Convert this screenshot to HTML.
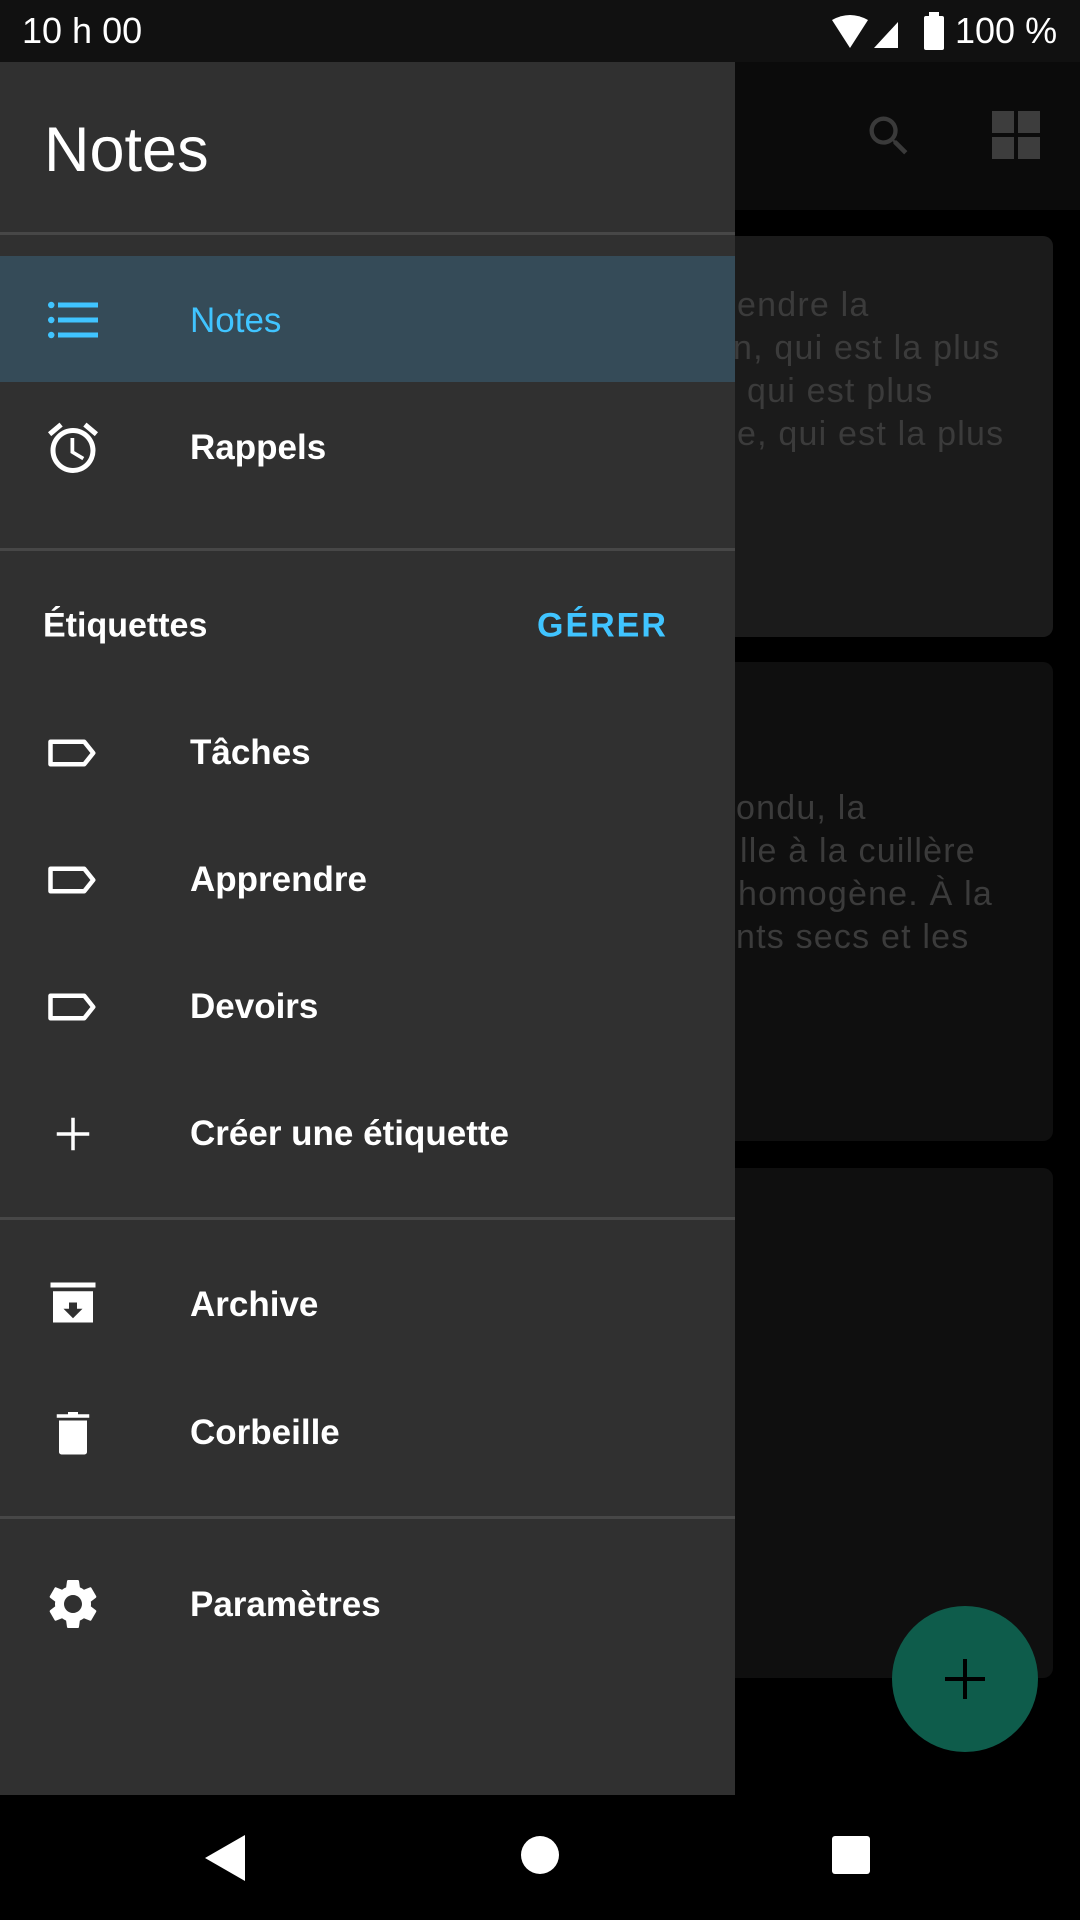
<!DOCTYPE html>
<html><head><meta charset="utf-8"><style>
*{margin:0;padding:0;box-sizing:border-box}
body{width:1080px;height:1920px;background:#000;position:relative;overflow:hidden;font-family:"Liberation Sans",Roboto,sans-serif}
.abs{position:absolute}
.status{left:0;top:0;width:1080px;height:62px;background:#111;color:#fff;font-size:36px}
.tb{left:735px;top:62px;width:345px;height:148px;background:#0b0b0b}
.card{border-radius:10px;left:700px;width:353px;overflow:hidden}
.ct{position:absolute;color:#3b3b3b;font-size:34px;white-space:nowrap;letter-spacing:1.2px}
.drawer{left:0;top:62px;width:735px;height:1733px;background:#303030}
.div{left:0;width:735px;height:3px;background:#474747}
.item{left:190px;color:#fff;font-size:35px;font-weight:bold;transform:translateY(-50%)}
.ic{left:43px;width:60px;height:60px;transform:translateY(-50%)}
.nav{left:0;top:1795px;width:1080px;height:125px;background:#000}
</style></head><body>
<div class="abs status">
<div class="abs" style="left:22px;top:10px">10 h 00</div>
<svg class="abs" style="left:830px;top:14px" width="70" height="36" viewBox="0 0 70 36"><path d="M2 6 Q20 -4 38 6 L20 34 Z" fill="#fff"/><path d="M44 34 L68 8 L68 34 Z" fill="#fff"/></svg>
<svg class="abs" style="left:922px;top:12px" width="24" height="38"><rect x="7" y="0" width="10" height="4" fill="#fff"/><rect x="2" y="4" width="20" height="34" rx="2" fill="#fff"/></svg>
<div class="abs" style="left:955px;top:10px">100 %</div>
</div>
<div class="abs tb">
<svg class="abs" style="left:128px;top:48px" width="52" height="52" viewBox="0 0 24 24"><path fill="#3a3a3a" d="M15.5 14h-.79l-.28-.27A6.471 6.471 0 0016 9.5 6.5 6.5 0 109.5 16c1.61 0 3.09-.59 4.23-1.57l.27.28v.79l5 4.99L20.49 19l-4.99-5zm-6 0C7.01 14 5 11.99 5 9.5S7.01 5 9.5 5 14 7.01 14 9.5 11.99 14 9.5 14z"/></svg>
<svg class="abs" style="left:257px;top:49px" width="48" height="48"><rect x="0" y="0" width="22" height="22" fill="#3d3d3d"/><rect x="26" y="0" width="22" height="22" fill="#3d3d3d"/><rect x="0" y="26" width="22" height="22" fill="#3d3d3d"/><rect x="26" y="26" width="22" height="22" fill="#3d3d3d"/></svg>
</div>
<div class="abs card" style="top:236px;height:401px;background:#1b1b1b">
<div class="ct" style="left:37px;top:50px">endre la</div>
<div class="ct" style="left:33px;top:93px">n, qui est la plus</div>
<div class="ct" style="left:47px;top:136px">qui est plus</div>
<div class="ct" style="left:37px;top:179px">e, qui est la plus</div>
</div>
<div class="abs card" style="top:662px;height:479px;background:#0f0f0f">
<div class="ct" style="left:36px;top:127px">ondu, la</div>
<div class="ct" style="left:40px;top:170px">lle à la cuillère</div>
<div class="ct" style="left:38px;top:213px">homogène. À la</div>
<div class="ct" style="left:36px;top:256px">nts secs et les</div>
</div>
<div class="abs card" style="top:1168px;height:510px;background:#0f0f0f"></div>
<div class="abs" style="left:892px;top:1606px;width:146px;height:146px;border-radius:50%;background:#0e5c4b"></div>
<svg class="abs" style="left:945px;top:1659px" width="40" height="40"><rect x="18" y="0" width="4" height="40" fill="#000"/><rect x="0" y="18" width="40" height="4" fill="#000"/></svg>

<div class="abs drawer"></div>
<div class="abs" style="left:44px;top:150px;transform:translateY(-50%);color:#fff;font-size:63px">Notes</div>
<div class="abs div" style="top:232px"></div>
<div class="abs" style="left:0;top:256px;width:735px;height:126px;background:#354b58"></div>
<svg class="abs ic" style="top:320px" viewBox="0 0 24 24"><g fill="#40c4ff"><circle cx="3.3" cy="6" r="1.3"/><circle cx="3.3" cy="12" r="1.3"/><circle cx="3.3" cy="18" r="1.3"/><rect x="6" y="5" width="16" height="2"/><rect x="6" y="11" width="16" height="2"/><rect x="6" y="17" width="16" height="2"/></g></svg>
<div class="abs item" style="top:321px;color:#40c4ff;font-weight:normal">Notes</div>
<svg class="abs ic" style="top:448px" viewBox="0 0 24 24"><path fill="#fff" d="M22 5.72l-4.6-3.86-1.29 1.53 4.6 3.86L22 5.72zM7.88 3.39L6.6 1.86 2 5.71l1.29 1.53 4.59-3.85zM12.5 8H11v6l4.75 2.85.75-1.23-4-2.37V8zM12 4c-4.97 0-9 4.030-9 9s4.02 9 9 9a9 9 0 000-18zm0 16c-3.87 0-7-3.13-7-7s3.13-7 7-7 7 3.13 7 7-3.13 7-7 7z"/></svg>
<div class="abs item" style="top:448px">Rappels</div>
<div class="abs div" style="top:548px"></div>
<div class="abs item" style="left:43px;top:626px;font-size:34px">Étiquettes</div>
<div class="abs item" style="left:537px;top:626px;color:#40c4ff;font-size:34px;letter-spacing:2px">GÉRER</div>
<svg class="abs ic" style="top:753px" viewBox="0 0 24 24"><path fill="none" stroke="#fff" stroke-width="1.8" stroke-linejoin="round" d="M3 7.5h13.5l3.6 4.5-3.6 4.5H3z"/></svg>
<div class="abs item" style="top:753px">Tâches</div>
<svg class="abs ic" style="top:880px" viewBox="0 0 24 24"><path fill="none" stroke="#fff" stroke-width="1.8" stroke-linejoin="round" d="M3 7.5h13.5l3.6 4.5-3.6 4.5H3z"/></svg>
<div class="abs item" style="top:880px">Apprendre</div>
<svg class="abs ic" style="top:1007px" viewBox="0 0 24 24"><path fill="none" stroke="#fff" stroke-width="1.8" stroke-linejoin="round" d="M3 7.5h13.5l3.6 4.5-3.6 4.5H3z"/></svg>
<div class="abs item" style="top:1007px">Devoirs</div>
<svg class="abs ic" style="top:1134px" viewBox="0 0 24 24"><path fill="#fff" d="M5.5 11.3h13v1.4h-13z M11.3 5.5h1.4v13h-1.4z"/></svg>
<div class="abs item" style="top:1134px">Créer une étiquette</div>
<div class="abs div" style="top:1217px"></div>
<svg class="abs ic" style="top:1305px" viewBox="0 0 24 24"><path fill="#fff" d="M3 3h18v2H3z M4 6.5h16V19H4z"/><path fill="#303030" d="M10.4 11h3.2v2.5h2.2L12 17.3 8.2 13.5h2.2z"/></svg>
<div class="abs item" style="top:1305px">Archive</div>
<svg class="abs ic" style="top:1433px" viewBox="0 0 24 24"><path fill="#fff" d="M5.5 4.5h13v1.4h-13z M10 3.6h4v1h-4z M6.4 7h11.2v12.6a1 1 0 01-1 1H7.4a1 1 0 01-1-1z"/></svg>
<div class="abs item" style="top:1433px">Corbeille</div>
<div class="abs div" style="top:1516px"></div>
<svg class="abs ic" style="top:1604px" viewBox="0 0 24 24"><path fill="#fff" d="M19.14 12.94c.04-.3.06-.61.06-.94 0-.32-.02-.64-.07-.94l2.03-1.58a.49.49 0 00.12-.61l-1.92-3.32a.488.488 0 00-.59-.22l-2.39.96c-.5-.38-1.03-.7-1.62-.94l-.36-2.54a.484.484 0 00-.48-.41h-3.840c-.24 0-.43.17-.47.41l-.36 2.54c-.59.24-1.13.57-1.62.94l-2.39-.96c-.22-.08-.47 0-.59.22L2.74 8.87c-.12.21-.08.47.12.61l2.03 1.58c-.05.3-.09.63-.09.94s.02.64.07.94l-2.03 1.58a.49.49 0 00-.12.61l1.92 3.32c.12.22.37.29.59.22l2.39-.96c.5.38 1.03.7 1.62.94l.36 2.54c.05.24.24.41.48.41h3.84c.24 0 .44-.17.47-.41l.36-2.54c.59-.24 1.13-.56 1.62-.94l2.39.96c.22.08.47 0 .59-.22l1.92-3.32c.12-.22.07-.47-.12-.61l-2.01-1.58zM12 15.6c-1.98 0-3.6-1.62-3.6-3.6s1.62-3.6 3.6-3.6 3.6 1.62 3.6 3.6-1.62 3.6-3.6 3.6z"/></svg>
<div class="abs item" style="top:1605px">Paramètres</div>

<div class="abs nav">
<svg class="abs" style="left:205px;top:40px" width="40" height="46"><path d="M0 23 L40 0 L40 46 Z" fill="#fff"/></svg>
<div class="abs" style="left:521px;top:41px;width:38px;height:38px;border-radius:50%;background:#fff"></div>
<div class="abs" style="left:832px;top:41px;width:38px;height:38px;border-radius:3px;background:#fff"></div>
</div>
</body></html>
